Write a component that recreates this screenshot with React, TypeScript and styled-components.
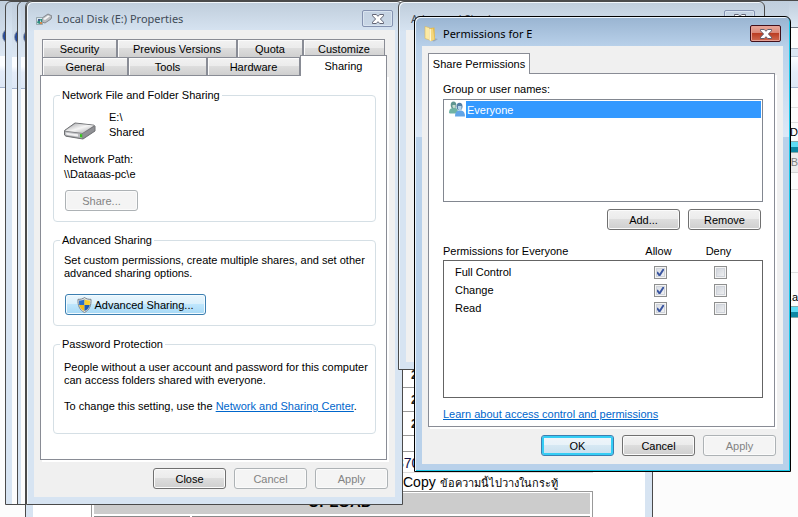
import React from "react";
import styled, { createGlobalStyle, css } from "styled-components";

const GlobalStyle = createGlobalStyle`
  *, *::before, *::after { box-sizing: border-box; }
  body {
    margin: 0;
    background: #fcfcfc;
    color: #000;
    font: 11px/14px "Liberation Sans", Arial, sans-serif;
  }
  button, input { font: inherit; color: inherit; margin: 0; }
`;

const Desktop = styled.main`
  position: relative;
  min-height: 100vh;
  overflow: hidden;
`;

/* ---------- background windows ---------- */

const Explorer = styled.div<{ $left: number; $bottom: number }>`
  position: absolute;
  left: ${(p) => p.$left}px;
  top: 1px;
  bottom: ${(p) => p.$bottom}px;
  width: 300px;
  display: flex;
  border: 1px solid #4a4a4a;
  border-radius: 6px 0 0 0;
  background: linear-gradient(#c3d1e0, #d7e4f2 30px);
`;

const BackExplorer = styled.div`
  position: absolute;
  inset: 0;
  border-top: 1px solid #4a4a4a;
  background: #fcfcfc;
  display: flex;
  justify-content: space-between;
`;

const Toolbars = styled.div<{ $inset?: number }>`
  flex: 1;
  margin-left: ${(p) => p.$inset ?? 0}px;
  background: #fcfcfc;
`;

const NavArea = styled.div`
  height: 55px;
  padding-top: 27px;
  background: linear-gradient(#c0cedd, #dce7f3);
`;

const CommandBar = styled.div`
  height: 32px;
  border-bottom: 1px solid #a3b2cb;
  background: linear-gradient(#fbfdff 0 30%, #e4ecf8 50%, #dde7f5);
`;

const NavOrb = styled.div`
  width: 16px;
  height: 16px;
  margin-left: 2px;
  border: 1px solid #8795ab;
  border-radius: 8px;
  background: radial-gradient(#4470c8, #12317e);
`;

const RightEdge = styled.div`
  width: 9px;
  display: flex;
  flex-direction: column;
  line-height: 18px;
`;

const Strip = styled.div<{ $h: number; $bg?: string; $line?: string; $dim?: boolean }>`
  flex: none;
  height: ${(p) => p.$h}px;
  text-align: right;
  color: ${(p) => (p.$dim ? "#808080" : "#000")};
  background: ${(p) => p.$bg ?? "transparent"};
  border-bottom: ${(p) => (p.$line ? `1px solid ${p.$line}` : "0")};
`;

const Meter = styled(Strip)`
  border: 1px solid #8aa;
  border-width: 1px 0;
  background: linear-gradient(#5fdcf5 0 50%, #0d87a3 50%);
`;

const Browser = styled.div`
  position: absolute;
  left: 25px;
  top: 1px;
  bottom: 0;
  width: 628px;
  display: flex;
  padding: 0 7px;
  border: solid #4a4a4a;
  border-width: 0 1px;
  border-radius: 6px 0 0 0;
  background: #d7e4f2;
  overflow: hidden;
`;

const PageBody = styled.div`
  flex: 1;
  min-width: 0;
  padding: 362px 52px 0 58px;
  background: #fff;
`;

const PageRow = styled.div<{ $h: number; $line: string }>`
  height: ${(p) => p.$h}px;
  padding-left: 320px;
  border-bottom: 1px solid ${(p) => p.$line};
  font: bold 12px/24px "Liberation Sans", sans-serif;
  color: #1d1d1d;
`;

const CodeRow = styled(PageRow)`
  padding-left: 305px;
  font: 14px/22px "Liberation Sans", sans-serif;
  color: #101048;
`;

const Snippet = styled.p`
  height: 18px;
  margin: 0 0 0 312px;
  font: 14px/18px "Liberation Sans", sans-serif;
  white-space: nowrap;
  span { font-size: 11px; }
`;

const UploadFrame = styled.div`
  height: 60px;
  padding: 1px 2px;
  border: solid #999;
  border-width: 1px 1px 0;
`;

const UploadHeading = styled.div`
  height: 21px;
  padding-right: 4px;
  margin-bottom: 2px;
  background: #ccc;
  text-align: center;
  font: bold 15px/18px "Liberation Sans", sans-serif;
`;

const UploadCells = styled.div`
  display: grid;
  grid-template-columns: 96px 1fr;
  gap: 2px;
  height: 20px;
  & > * { border: 1px solid #888; }
`;

/* ---------- dialog shell ---------- */

const activeSkin = css`
  border: 1px solid #000;
  background: linear-gradient(#99b4d1, #b9d1ea 30px, #dbe8f7 120px, #b9d1ea 120px);
  box-shadow: inset 1px 1px #ecf5fd, inset -1px -1px #19c8e8;
`;

const idleSkin = css`
  border: 1px solid #4a4a4a;
  background: linear-gradient(#bfcddb, #d7e4f2 30px);
  box-shadow: inset 1px 1px #f2f7fb;
`;

const Dialog = styled.section<{ $left: number; $top: number; $width: number; $active?: boolean }>`
  position: absolute;
  left: ${(p) => p.$left}px;
  top: ${(p) => p.$top}px;
  width: ${(p) => p.$width}px;
  padding: 0 7px 7px;
  border-radius: 6px 6px 0 0;
  ${(p) => (p.$active ? activeSkin : idleSkin)}
`;

const TitleBar = styled.header<{ $active?: boolean }>`
  display: flex;
  align-items: flex-start;
  height: ${(p) => (p.$active ? 29 : 28)}px;
  color: ${(p) => (p.$active ? "#000" : "#414b57")};
  & > svg { flex: none; margin: 9px 0 0 2px; }
`;

const Title = styled.h1`
  flex: 1;
  margin: 8px 0 0 5px;
  font: 11px/18px "Noto Sans", "Open Sans", sans-serif;
`;

const CloseButton = styled.button<{ $active?: boolean }>`
  display: grid;
  place-items: center;
  width: 31px;
  height: 17px;
  margin: 8px 2px 0 0;
  padding: 0;
  border: 1px solid ${(p) => (p.$active ? "#43101a" : "#8492b0")};
  border-radius: 2px;
  background: ${(p) =>
    p.$active
      ? "linear-gradient(#e9a99b, #d98575 48%, #bb3d23 50%, #cf6a51)"
      : "linear-gradient(#c4d2e2, #c9d7e6)"};
  box-shadow: inset 0 0 0 1px ${(p) => (p.$active ? "#e6a196" : "#d9e4f0")};
`;

const Client = styled.div<{ $h?: number }>`
  min-height: ${(p) => p.$h ?? 0}px;
  padding: 9px 6px 8px;
  background: #f0f0f0;
`;

const Footer = styled.footer`
  display: flex;
  justify-content: flex-end;
  gap: 8px;
  padding: 8px 1px 0 0;
`;

type Look = "normal" | "default" | "hot";

const looks = {
  normal: css`
    border-color: #707070;
    background: linear-gradient(#f2f2f2, #ebebeb 49%, #dddddd 50%, #cfcfcf);
    box-shadow: inset 0 0 0 1px #fbfbfb;
  `,
  default: css`
    border-color: #3c7fb1;
    background: linear-gradient(#f0f5f9, #e8f2f9 49%, #d6e8f3 50%, #c8dfee);
    box-shadow: inset 0 0 0 2px #35cdf5;
  `,
  hot: css`
    border-color: #3c7fb1;
    background: linear-gradient(#eaf6fd, #d9f0fc 49%, #bee6fd 50%, #a7d9f5);
    box-shadow: inset 0 0 0 1px #f3fbff;
  `,
};

const PushButton = styled.button<{ $look?: Look; $width?: number }>`
  display: inline-flex;
  align-items: center;
  justify-content: center;
  gap: 2px;
  width: ${(p) => p.$width ?? 73}px;
  height: 21px;
  padding: 0;
  border: 1px solid;
  border-radius: 3px;
  white-space: nowrap;
  ${(p) => looks[p.$look ?? "normal"]}
  &:disabled {
    color: #838383;
    border-color: #adb2b5;
    background: #f4f4f4;
  }
`;

/* ---------- tabs ---------- */

const TabRow = styled.div<{ $indent?: number }>`
  display: flex;
  align-items: flex-end;
  height: 18px;
  margin: 0 4px 0 ${(p) => p.$indent ?? 0}px;
`;

const Tab = styled.button<{ $width: number }>`
  flex: none;
  width: ${(p) => p.$width}px;
  height: 18px;
  padding: 0;
  border: 1px solid #898c95;
  border-bottom: 0;
  background: linear-gradient(#f2f2f2, #ebebeb 49%, #dddddd 50%, #cfcfcf);
  box-shadow: inset 1px 1px #fbfbfb;
`;

const ActiveTab = styled(Tab)`
  z-index: 1;
  height: 21px;
  margin-bottom: -1px;
  background: #fff;
  box-shadow: none;
`;

const TabPanel = styled.div<{ $pad: string }>`
  margin-right: 2px;
  padding: ${(p) => p.$pad};
  border: 1px solid #898c95;
  background: #fff;
  box-shadow: 2px 2px #fff;
`;

/* ---------- properties content ---------- */

const Group = styled.fieldset<{ $h: number }>`
  min-width: 0;
  height: ${(p) => p.$h}px;
  margin: 0 0 11px;
  padding: 0 6px;
  border: 1px solid #d5dfe5;
  border-radius: 4px;
  legend { padding: 0 2px; }
`;

const GroupBody = styled.div<{ $top: number }>`
  padding: ${(p) => p.$top}px 0 0 4px;
  & > button { margin-left: 1px; }
`;

const Text = styled.p<{ $gap?: number }>`
  margin: 0 0 ${(p) => p.$gap ?? 0}px;
  line-height: 13px;
  white-space: nowrap;
`;

const DriveInfo = styled.div`
  display: flex;
  align-items: flex-end;
  gap: 13px;
  height: 30px;
  margin-bottom: 12px;
  line-height: 15px;
`;

const PathInfo = styled.div`
  margin-bottom: 8px;
  line-height: 15px;
`;

const Link = styled.a`
  color: #0066cc;
  text-decoration: underline;
`;

/* ---------- permissions content ---------- */

const FieldLabel = styled.div`
  margin-bottom: 3px;
`;

const ListBox = styled.ul`
  height: 103px;
  margin: 0 0 7px;
  padding: 1px;
  border: 1px solid #828790;
  list-style: none;
`;

const ListItem = styled.li`
  display: flex;
  height: 17px;
  line-height: 18px;
  padding-left: 4px;
  gap: 1px;
  color: #fff;
  span { flex: 1; padding-left: 1px; background: #3399ff; }
`;

const ListActions = styled.div`
  display: flex;
  justify-content: flex-end;
  gap: 8px;
  margin: 0 2px 14px 0;
`;

const PermissionTable = styled.table`
  display: block;
  margin-bottom: 9px;
  thead, tbody { display: block; }
  thead { height: 16px; padding-right: 13px; }
  tbody {
    height: 138px;
    padding: 2px 12px 0 11px;
    border: 1px solid #646464;
  }
  tr { display: grid; grid-template-columns: 1fr 60px 60px; align-items: center; }
  tbody tr { height: 18px; }
  th { padding: 0; font-weight: normal; }
  th:first-child { text-align: left; }
  td { display: grid; place-items: center; padding: 0; }
  thead th:nth-child(n + 2) { padding-right: 3px; }
`;

const tick = `url("data:image/svg+xml,%3Csvg xmlns='http://www.w3.org/2000/svg' viewBox='0 0 11 11'%3E%3Cpath d='M2 5l2.500 3.500L9 1.500' fill='none' stroke='%233a55a0' stroke-width='2'/%3E%3C/svg%3E")`;

const CheckBox = styled.input`
  appearance: none;
  width: 13px;
  height: 13px;
  border: 1px solid #8e8f8f;
  background: linear-gradient(135deg, #c9ced6, #f6f6f6);
  box-shadow: inset 0 0 0 1px #f4f4f4, inset 0 0 0 2px #cfd3da;
  &:checked { background: ${tick} center / 11px, linear-gradient(135deg, #d3d8e0, #f6f6f6); }
`;

/* ---------- icons ---------- */

const CrossIcon = () => (
  <svg width="12" height="10" viewBox="0 0 12 10" aria-hidden="true">
    <path d="M.5.5h3.800L6 2.300 7.700.5h3.800v1.300L8.400 5l3.100 3.200v1.300H7.700L6 7.700 4.300 9.500H.5V8.200L3.600 5 .5 1.800z" fill="#fff" stroke="#535666" strokeWidth=".9" />
  </svg>
);

const SmallDriveIcon = () => (
  <svg width="16" height="16" viewBox="0 0 16 16" aria-hidden="true">
    <path d="M6 7l6-4 4 2-1 3-6 4-3-1z" fill="#b9bcc0" stroke="#75797d" strokeWidth=".8" />
    <path d="M7 8l5-3.500 2 .8-5 3.700z" fill="#f5f5f5" />
    <path d="M.5 6.500h6v7h-6z" fill="#dce9ef" stroke="#8b9aa0" strokeWidth=".8" />
    <path d="M1 12l1-3 2 1v3zM4 8h2v3H5z" fill="#2f8f80" />
    <path d="M2 8h2v2H2z" fill="#405f8f" />
    <path d="M4 11h2v2H4z" fill="#d08a4f" />
  </svg>
);

const DriveIcon = () => (
  <svg width="32" height="18" viewBox="0 0 32 18" aria-hidden="true">
    <defs>
      <linearGradient id="driveTop" x1="0" y1="0" x2="1" y2="1">
        <stop offset="0" stopColor="#a2a2a5" />
        <stop offset=".5" stopColor="#f5f5f5" />
        <stop offset="1" stopColor="#a8a8ab" />
      </linearGradient>
    </defs>
    <path d="M.5 8.500L11 1l19 2.200 1 1V9L19 17 2 14.200.5 13z" fill="#77787b" stroke="#6f7174" strokeLinejoin="round" />
    <path d="M1 8.700L11.300 1.500 30 3.600 18.500 11z" fill="url(#driveTop)" />
    <path d="M1 9.500l17.300 2.300v4.400L2.200 13.600 1 12.700z" fill="#bcbdc0" />
    <path d="M2 10.700l12 1.600v2.200L2.500 12.700z" fill="#f0f0f1" />
    <path d="M19 11.600L30.500 4.500v4.200L19 16.300z" fill="#909195" />
    <path d="M16 12l2.200.3v3.300l-2.200-.4z" fill="#35c51d" />
  </svg>
);

const ShieldIcon = () => (
  <svg width="15" height="16" viewBox="0 0 15 16" aria-hidden="true">
    <path d="M7.500.5C9 1.800 11.500 2.500 14 2.300c.4 6-1.500 10.700-6.500 13.200C2.500 13 .6 8.300 1 2.300 3.500 2.500 6 1.800 7.500.5z" fill="#dfe3e6" stroke="#7c868d" />
    <path d="M7.500 2.300v5.600H2.200c-.2-1.300-.2-2.900-.1-4.300 2 0 3.800-.3 5.400-1.300z" fill="#2a6fc9" />
    <path d="M7.500 2.300c1.600 1 3.400 1.300 5.400 1.300.1 1.400.1 3-.1 4.300H7.500z" fill="#f8cf2f" />
    <path d="M2.200 7.900h5.300v6.200c-3-1.500-4.700-3.700-5.300-6.200z" fill="#f3bb18" />
    <path d="M12.800 7.900H7.500v6.200c3-1.500 4.700-3.700 5.300-6.200z" fill="#1e5cb5" />
  </svg>
);

const FolderIcon = () => (
  <svg width="14" height="16" viewBox="0 0 14 16" aria-hidden="true">
    <path d="M9 12l5 1-4 2.500-3-1z" fill="#8793a3" opacity=".6" />
    <path d="M6 2l4.500-.5.5 12L7 15z" fill="#e3b94c" />
    <path d="M1 .5l4.500 1.200V14L1 12.500z" fill="#fbeaa5" stroke="#d8b65c" strokeWidth=".6" />
    <path d="M5.500 3.500L9 2.500l1.500 11-4 2-1-1.500z" fill="#f5d77c" />
    <path d="M5.500 3l1.200-.3.3 12.300-1.500-1z" fill="#fffae0" />
  </svg>
);

const UsersIcon = () => (
  <svg width="16" height="16" viewBox="0 0 16 16" aria-hidden="true">
    <path d="M0 12c0-3 1-4.500 3.500-5h3C8.500 7.500 9 9 9 12.500H1z" fill="#6fb3a4" />
    <ellipse cx="4.500" cy="4" rx="2.800" ry="3.500" fill="#5f9590" />
    <path d="M3.500 4h3v2l-1.500 1.500L3.500 6z" fill="#c7ddd0" />
    <path d="M6 15.500c0-3.500 1-5.500 3.500-6h3c2.500.5 3.500 2.500 3.500 6z" fill="#62a5e6" />
    <ellipse cx="10.500" cy="5.500" rx="3" ry="3.700" fill="#557fa5" />
    <path d="M9 5h3.500v2.500L11 10 9 8z" fill="#b5d5ec" />
  </svg>
);

/* ---------- dialogs ---------- */

const PropertiesDialog = () => (
  <Dialog $left={26} $top={1} $width={377} aria-label="Local Disk (E:) Properties">
    <TitleBar>
      <SmallDriveIcon />
      <Title>Local Disk (E:) Properties</Title>
      <CloseButton aria-label="Close window"><CrossIcon /></CloseButton>
    </TitleBar>
    <Client>
      <TabRow role="tablist" $indent={2}>
        <Tab role="tab" $width={75}>Security</Tab>
        <Tab role="tab" $width={120}>Previous Versions</Tab>
        <Tab role="tab" $width={66}>Quota</Tab>
        <Tab role="tab" $width={82}>Customize</Tab>
      </TabRow>
      <TabRow role="tablist" $indent={2}>
        <Tab role="tab" $width={86}>General</Tab>
        <Tab role="tab" $width={79}>Tools</Tab>
        <Tab role="tab" $width={93}>Hardware</Tab>
        <ActiveTab role="tab" aria-selected $width={87}>Sharing</ActiveTab>
      </TabRow>
      <TabPanel $pad="12px 10px 14px 12px">
        <Group $h={134}>
          <legend>Network File and Folder Sharing</legend>
          <GroupBody $top={8}>
            <DriveInfo>
              <DriveIcon />
              <div>E:\<br />Shared</div>
            </DriveInfo>
            <PathInfo>Network Path:<br />\\Dataaas-pc\e</PathInfo>
            <PushButton disabled>Share...</PushButton>
          </GroupBody>
        </Group>
        <Group $h={93}>
          <legend>Advanced Sharing</legend>
          <GroupBody $top={7}>
            <Text $gap={14}>
              Set custom permissions, create multiple shares, and set other<br />
              advanced sharing options.
            </Text>
            <PushButton $look="hot" $width={141}><ShieldIcon />Advanced Sharing...</PushButton>
          </GroupBody>
        </Group>
        <Group $h={97}>
          <legend>Password Protection</legend>
          <GroupBody $top={10}>
            <Text $gap={13}>
              People without a user account and password for this computer<br />
              can access folders shared with everyone.
            </Text>
            <Text>
              To change this setting, use the <Link href="#network">Network and Sharing Center</Link>.
            </Text>
          </GroupBody>
        </Group>
      </TabPanel>
      <Footer>
        <PushButton>Close</PushButton>
        <PushButton disabled>Cancel</PushButton>
        <PushButton disabled>Apply</PushButton>
      </Footer>
    </Client>
  </Dialog>
);

const permissions = [
  { name: "Full Control", allow: true },
  { name: "Change", allow: true },
  { name: "Read", allow: true },
];

const PermissionsDialog = () => (
  <Dialog $left={414} $top={16} $width={377} $active aria-label="Permissions for E">
    <TitleBar $active>
      <FolderIcon />
      <Title>Permissions for E</Title>
      <CloseButton $active aria-label="Close window"><CrossIcon /></CloseButton>
    </TitleBar>
    <Client>
      <TabRow role="tablist">
        <ActiveTab role="tab" aria-selected $width={102}>Share Permissions</ActiveTab>
      </TabRow>
      <TabPanel $pad="8px 11px 5px 14px">
        <FieldLabel id="names">Group or user names:</FieldLabel>
        <ListBox role="listbox" aria-labelledby="names">
          <ListItem role="option" aria-selected><UsersIcon /><span>Everyone</span></ListItem>
        </ListBox>
        <ListActions>
          <PushButton>Add...</PushButton>
          <PushButton>Remove</PushButton>
        </ListActions>
        <PermissionTable>
          <thead>
            <tr><th scope="col">Permissions for Everyone</th><th scope="col">Allow</th><th scope="col">Deny</th></tr>
          </thead>
          <tbody>
            {permissions.map((p) => (
              <tr key={p.name}>
                <th scope="row">{p.name}</th>
                <td><CheckBox type="checkbox" defaultChecked={p.allow} aria-label={`Allow ${p.name}`} /></td>
                <td><CheckBox type="checkbox" aria-label={`Deny ${p.name}`} /></td>
              </tr>
            ))}
          </tbody>
        </PermissionTable>
        <Link href="#permissions">Learn about access control and permissions</Link>
      </TabPanel>
      <Footer>
        <PushButton $look="default">OK</PushButton>
        <PushButton>Cancel</PushButton>
        <PushButton disabled>Apply</PushButton>
      </Footer>
    </Client>
  </Dialog>
);

export default function App() {
  return (
    <>
      <GlobalStyle />
      <Desktop>
        <BackExplorer>
          <Toolbars><NavArea><NavOrb /></NavArea><CommandBar /></Toolbars>
          <RightEdge>
            <Strip $h={27} $bg="linear-gradient(#c0cedd, #dce7f3)" $line="#6c7480" />
            <Strip $h={21} $line="#a9b4c2" />
            <Strip $h={8} $bg="#dbe6f2" $line="#b5c2d2" />
            <Strip $h={31} $bg="linear-gradient(#fbfdff, #e4ecf8 50%, #dde7f5)" $line="#a3b2cb" />
            <Strip $h={20} $line="#dedede" />
            <Strip $h={15} $line="#dedede" />
            <Strip $h={18}>D</Strip>
            <Meter $h={12} />
            <Strip $h={20} $bg="#ececec" $line="#d4d4d4" $dim>B</Strip>
            <Strip $h={17} $line="#dedede" />
            <Strip $h={83} $line="#dedede" />
            <Strip $h={15} />
            <Strip $h={18}>.a</Strip>
            <Meter $h={12} />
          </RightEdge>
        </BackExplorer>
        <Explorer $left={5} $bottom={12}>
          <Toolbars $inset={6}><NavArea><NavOrb /></NavArea><CommandBar /></Toolbars>
        </Explorer>
        <Explorer $left={17} $bottom={12}>
          <Toolbars $inset={3}><NavArea><NavOrb /></NavArea><CommandBar /></Toolbars>
        </Explorer>
        <Browser>
          <PageBody>
            <PageRow $h={25} $line="#999">2</PageRow>
            <PageRow $h={24} $line="#999">2</PageRow>
            <PageRow $h={24} $line="#999">2</PageRow>
            <PageRow $h={16} $line="#999" />
            <CodeRow $h={21} $line="#ddd">370</CodeRow>
            <Snippet>Copy <span>ข้อความนี้ไปวางในกระทู้</span></Snippet>
            <UploadFrame>
              <UploadHeading>UPLOAD</UploadHeading>
              <UploadCells><div /><div /></UploadCells>
            </UploadFrame>
          </PageBody>
        </Browser>
        <PropertiesDialog />
        <Dialog $left={398} $top={1} $width={367} aria-label="Advanced Sharing">
          <TitleBar>
            <Title>Advanced Sharing</Title>
            <CloseButton aria-label="Close window"><CrossIcon /></CloseButton>
          </TitleBar>
          <Client $h={332} />
        </Dialog>
        <PermissionsDialog />
      </Desktop>
    </>
  );
}
